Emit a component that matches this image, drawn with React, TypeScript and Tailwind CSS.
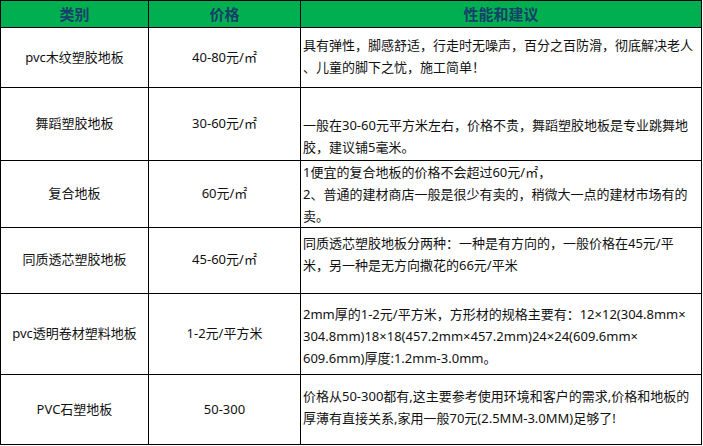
const rows = [
  {
    name: 'pvc木纹塑胶地板',
    price: '40-80元/㎡',
    h: 'h-[60px]',
    pad: 'pt-[6px]',
    lines: ['具有弹性，脚感舒适，行走时无噪声，百分之百防滑，彻底解决老人', '、儿童的脚下之忧，施工简单！'],
  },
  {
    name: '舞蹈塑胶地板',
    price: '30-60元/㎡',
    h: 'h-[73px]',
    pad: 'pt-[26px]',
    lines: ['一般在30-60元平方米左右，价格不贵，舞蹈塑胶地板是专业跳舞地', '胶，建议铺5毫米。'],
  },
  {
    name: '复合地板',
    price: '60元/㎡',
    h: 'h-[65px]',
    pad: 'pt-0',
    lines: ['1便宜的复合地板的价格不会超过60元/㎡，', '2、普通的建材商店一般是很少有卖的，稍微大一点的建材市场有的', '卖。'],
  },
  {
    name: '同质透芯塑胶地板',
    price: '45-60元/㎡',
    h: 'h-[68px]',
    pad: 'pt-[6px]',
    lines: ['同质透芯塑胶地板分两种：一种是有方向的，一般价格在45元/平', '米，另一种是无方向撒花的66元/平米'],
  },
  {
    name: 'pvc透明卷材塑料地板',
    price: '1-2元/平方米',
    h: 'h-[81px]',
    pad: 'pt-[9px]',
    lines: [
      '2mm厚的1-2元/平方米，方形材的规格主要有：12×12(304.8mm×',
      '304.8mm)18×18(457.2mm×457.2mm)24×24(609.6mm×',
      '609.6mm)厚度:1.2mm-3.0mm。',
    ],
  },
  {
    name: 'PVC石塑地板',
    price: '50-300',
    h: 'h-[70px]',
    pad: 'pt-[10px]',
    lines: ['价格从50-300都有,这主要参考使用环境和客户的需求,价格和地板的', '厚薄有直接关系,家用一般70元(2.5MM-3.0MM)足够了!'],
  },
];

const font = "font-['Noto_Sans','Noto_Sans_CJK_SC',sans-serif]";

export default function App() {
  return (
    <div className={`w-[703px] h-[446px] bg-white ${font} text-[13px] text-[#111]`}>
      <div className="w-[702px] border-l border-t border-black">
        <div className="grid grid-cols-[148px_152px_401px] h-[27px] bg-[#00b050] text-[15px] font-bold text-[#17406a]">
          <div className="flex items-center justify-center border-r border-b border-black">类别</div>
          <div className="flex items-center justify-center border-r border-b border-black">价格</div>
          <div className="flex items-center justify-center border-r border-b border-black">性能和建议</div>
        </div>
        {rows.map((r) => (
          <div key={r.name} className={`grid grid-cols-[148px_152px_401px] ${r.h}`}>
            <div className="flex items-center justify-center border-r border-b border-black">{r.name}</div>
            <div className="flex items-center justify-center border-r border-b border-black">{r.price}</div>
            <div className={`border-r border-b border-black pl-[2px] ${r.pad} leading-[22px]`}>
              {r.lines.map((l) => (
                <div key={l} className="whitespace-nowrap">
                  {l}
                </div>
              ))}
            </div>
          </div>
        ))}
      </div>
    </div>
  );
}
